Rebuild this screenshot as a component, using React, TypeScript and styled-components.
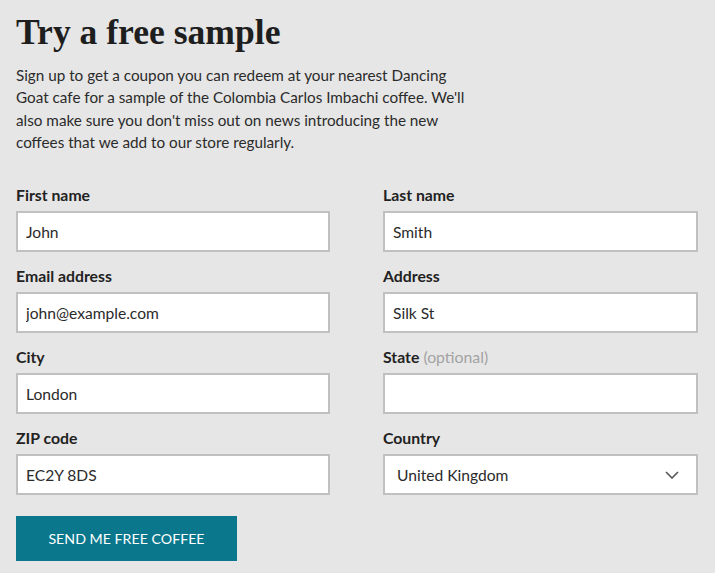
import React from "react";
import styled, { createGlobalStyle } from "styled-components";

const Colors = {
  Page: "#e6e6e6",
  Text: "#222222",
  Border: "#c0c0c0",
  Muted: "#a3a3a3",
  Button: "#0a778c",
};

const GlobalStyle = createGlobalStyle`
  body {
    margin: 0;
    background: ${Colors.Page};
    font-family: "Source Sans Pro", Lato, "Noto Sans", sans-serif;
    color: ${Colors.Text};
  }
`;

interface fieldInterface {
  label: string;
  value?: string;
  optional?: boolean;
  select?: boolean;
}

const fields: fieldInterface[] = [
  { label: "First name", value: "John" },
  { label: "Last name", value: "Smith" },
  { label: "Email address", value: "john@example.com" },
  { label: "Address", value: "Silk St" },
  { label: "City", value: "London" },
  { label: "State", value: "", optional: true },
  { label: "ZIP code", value: "EC2Y 8DS" },
  { label: "Country", value: "United Kingdom", select: true },
];

const Field: React.FC<fieldInterface> = ({ label, value, optional, select }) => (
  <FieldContainer>
    <Label>
      {label}
      {optional && <Optional> (optional)</Optional>}
    </Label>
    {select ? (
      <SelectBox>
        <span>{value}</span>
        <svg width="14" height="8" viewBox="0 0 14 8">
          <path d="M1 1l6 6 6-6" fill="none" stroke="#555" strokeWidth="1.6" />
        </svg>
      </SelectBox>
    ) : (
      <InputLine readOnly value={value} />
    )}
  </FieldContainer>
);

const App: React.FC = () => {
  return (
    <Page>
      <GlobalStyle />
      <Title>Try a free sample</Title>
      <Intro>
        Sign up to get a coupon you can redeem at your nearest Dancing Goat
        cafe for a sample of the Colombia Carlos Imbachi coffee. We'll also
        make sure you don't miss out on news introducing the new coffees that
        we add to our store regularly.
      </Intro>
      <Form>
        {fields.map((f) => (
          <Field key={f.label} {...f} />
        ))}
      </Form>
      <Submit type="button">SEND ME FREE COFFEE</Submit>
    </Page>
  );
};

export default App;

const Page = styled.div`
  padding: 0 17px 0 16px;
`;

const Title = styled.h1`
  margin: 0;
  padding-top: 10px;
  font-family: "Liberation Serif", "Times New Roman", serif;
  font-weight: bold;
  font-size: 35.6px;
  line-height: 44px;
  color: #1e1e1e;
`;

const Intro = styled.p`
  margin: 10px 0 0;
  max-width: 462px;
  font-size: 15.25px;
  line-height: 22.3px;
  color: #2b2b2b;
`;

const Form = styled.div`
  display: grid;
  grid-template-columns: 314px 315px;
  column-gap: 53px;
  row-gap: 14px;
  margin-top: 32px;
`;

const FieldContainer = styled.div`
  display: flex;
  flex-direction: column;
`;

const Label = styled.label`
  font-weight: bold;
  font-size: 15.8px;
  line-height: 20px;
  margin-bottom: 6px;
`;

const Optional = styled.span`
  font-weight: normal;
  color: ${Colors.Muted};
`;

const boxStyle = `
  box-sizing: border-box;
  height: 41px;
  border: 2px solid ${Colors.Border};
  background: #fff;
  font-size: 15.6px;
  color: #2b2b2b;
`;

const InputLine = styled.input`
  ${boxStyle}
  width: 100%;
  padding: 0 8px;
  font-family: inherit;
  outline: none;
`;

const SelectBox = styled.div`
  ${boxStyle}
  display: flex;
  align-items: center;
  justify-content: space-between;
  padding: 0 17px 0 12px;
`;

const Submit = styled.button`
  margin-top: 21px;
  width: 221px;
  height: 45px;
  border: none;
  background: ${Colors.Button};
  color: #fff;
  font-family: inherit;
  font-size: 14.2px;
  cursor: pointer;
`;
